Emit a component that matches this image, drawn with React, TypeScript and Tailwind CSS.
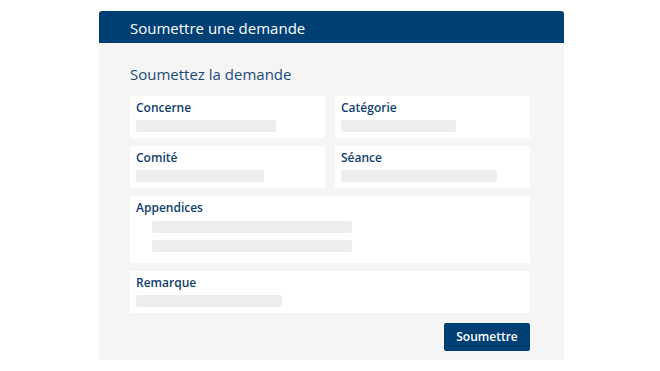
import React from 'react'

const font = { fontFamily: '"Open Sans", "Noto Sans", Arial, sans-serif' }

function Skeleton({ width }: { width: string }) {
  return <div className={`h-[12px] rounded-[2px] bg-[#eeeeee] ${width}`}></div>
}

function Field({ label, bar }: { label: string; bar: string }) {
  return (
    <div className="bg-white px-[6px] pt-[3px] pb-[6px]">
      <div className="text-[12px] leading-[18px] font-semibold text-[#0f3e6d]">{label}</div>
      <div className="mt-[3px]">
        <Skeleton width={bar} />
      </div>
    </div>
  )
}

export default function App() {
  return (
    <div className="min-h-screen bg-white pt-[11px]" style={font}>
      <div className="ml-[99px] w-[465px] h-[349px] bg-[#f5f5f5] rounded-t-[3px] flex flex-col">
        {/* Header */}
        <div className="h-[32px] bg-[#003f74] rounded-t-[3px] pl-[31px] pt-[5px]">
          <span className="text-white text-[15px] leading-[20px]">Soumettre une demande</span>
        </div>

        {/* Body */}
        <div className="pl-[31px] pr-[34px] pt-[21px]">
          <h2 className="text-[15px] leading-[20px] text-[#1b4a78] mb-[12px]">Soumettez la demande</h2>

          <div className="grid grid-cols-2 gap-x-[10px] gap-y-[8px]">
            <Field label="Concerne" bar="w-[140px]" />
            <Field label="Catégorie" bar="w-[115px]" />
            <Field label="Comité" bar="w-[128px]" />
            <Field label="Séance" bar="w-[156px]" />
          </div>

          <div className="mt-[8px] bg-white pl-[6px] pt-[3px] pb-[11px]">
            <div className="text-[12px] leading-[18px] font-semibold text-[#0f3e6d]">Appendices</div>
            <div className="mt-[4px] pl-[16px] flex flex-col gap-[7px]">
              <Skeleton width="w-[200px]" />
              <Skeleton width="w-[200px]" />
            </div>
          </div>

          <div className="mt-[8px]">
            <Field label="Remarque" bar="w-[146px]" />
          </div>

          <div className="mt-[10px] flex justify-end">
            <button className="h-[28px] w-[86px] bg-[#003f74] rounded-[2px] text-white text-[12px] font-semibold">
              Soumettre
            </button>
          </div>
        </div>
      </div>
    </div>
  )
}
